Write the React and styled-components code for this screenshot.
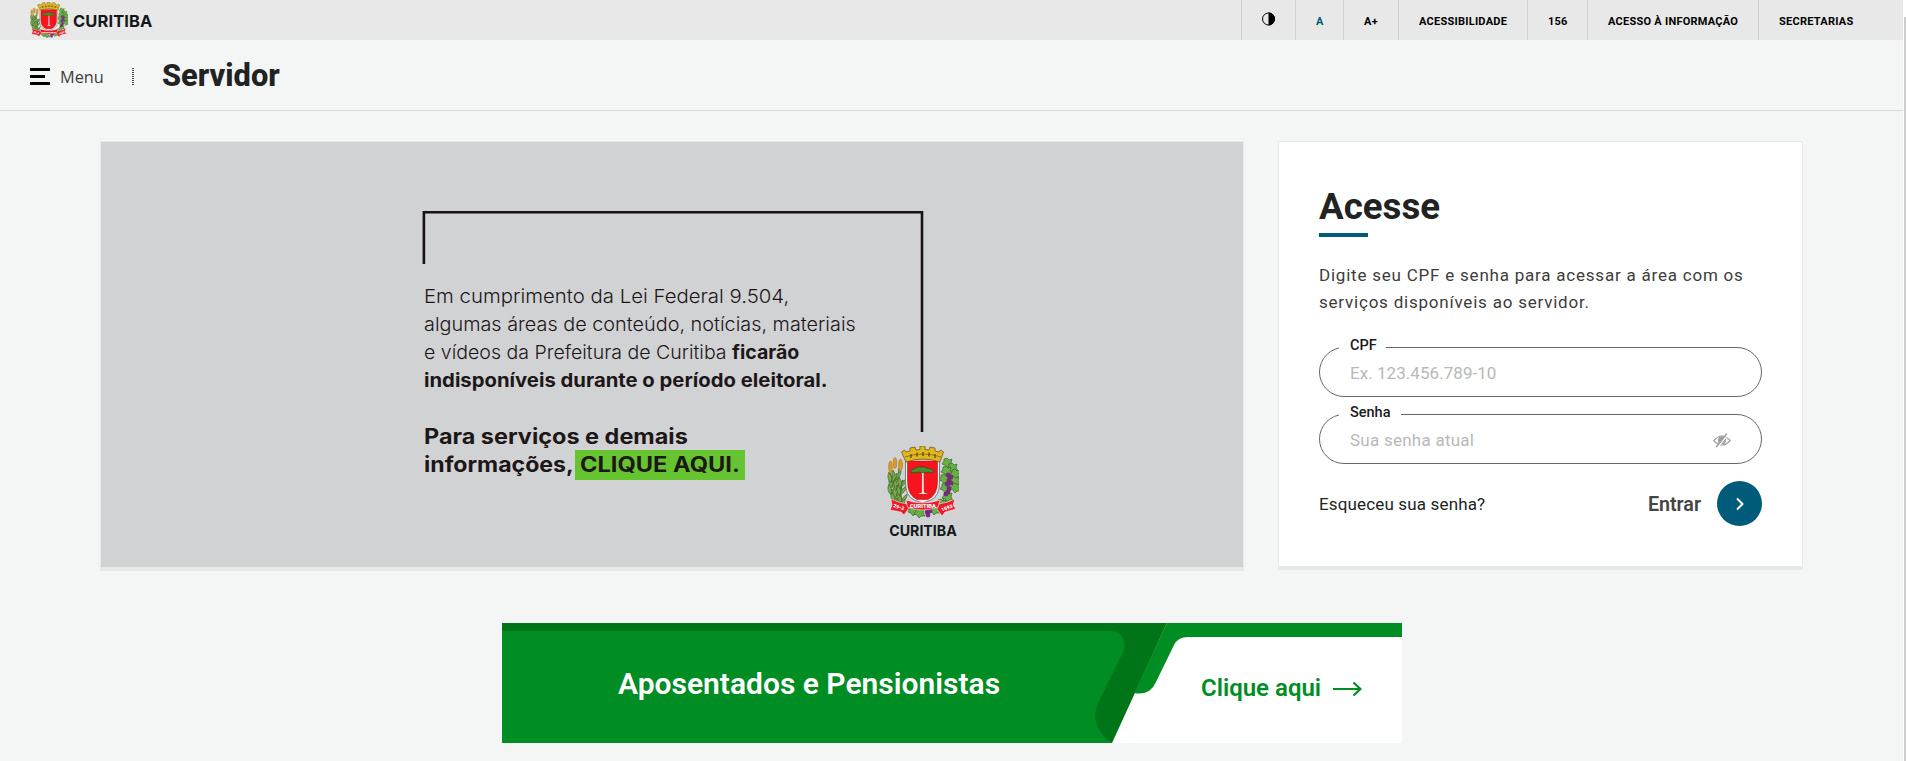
import React from "react";
import styled, { createGlobalStyle } from "styled-components";

const Global = createGlobalStyle`
  * { box-sizing: border-box; }
  html, body { margin: 0; padding: 0; }
  body {
    background: #f4f6f6;
    font-family: Roboto, "Liberation Sans", sans-serif;
    color: #212322;
    overflow: hidden;
  }
`;

const Shell = styled.div`
  display: flex;
  height: 761px;
  overflow: hidden;
`;

const Page = styled.div`
  width: 1903px;
  flex: none;
`;

const ScrollTrack = styled.div`
  flex: 1;
  padding: 17px 0 0 1px;
  background: #fff;
`;

const ScrollThumb = styled.div`
  height: 744px;
  background: #cdcdcd;
`;

const TopBar = styled.header`
  display: flex;
  justify-content: space-between;
  height: 40px;
  padding: 0 29px 0 30px;
  background: #e8e8e8;
`;

const Brand = styled.a`
  display: flex;
  align-items: center;
  gap: 5px;
  height: 40px;
`;

const BrandName = styled.span`
  padding-top: ${(p) => p.$drop || 0}px;
  font: 700 ${(p) => p.$size}px/1 Inter, sans-serif;
  letter-spacing: ${(p) => p.$track}px;
  color: #14181a;
`;

const TopNav = styled.nav`
  display: flex;
`;

const TopLink = styled.a`
  display: flex;
  align-items: center;
  width: ${(p) => p.$w}px;
  height: 40px;
  padding: 2px 0 0 20px;
  border-left: 1px solid #d3d3d3;
  font-size: 11px;
  font-weight: 700;
  letter-spacing: 0.25px;
  white-space: nowrap;
  color: ${(p) => (p.$active ? "#005a7a" : "#000")};
`;

const MenuBar = styled.div`
  display: flex;
  align-items: center;
  height: 71px;
  padding-left: 30px;
  border-bottom: 1px solid #d9dcdc;
`;

const Burger = styled.span`
  display: flex;
  flex-direction: column;
  gap: 4px;
  width: 20px;
  margin-top: 2px;
`;

const Bar = styled.i`
  height: 3px;
  width: ${(p) => p.$w}px;
  background: #000;
`;

const MenuLabel = styled.span`
  width: 72px;
  margin: 3px 0 0 10px;
  font: 400 16.3px/24px "Open Sans", sans-serif;
  color: #3c3c3b;
`;

const Divider = styled.span`
  width: 2px;
  height: 17px;
  margin-top: 2px;
  background: repeating-linear-gradient(#444 0 1px, transparent 1px 2px);
`;

const SiteTitle = styled.h1`
  margin: 2px 0 0 28px;
  font-size: 30.800px;
  line-height: 40px;
  font-weight: 800;
`;

const Main = styled.main`
  padding: 30px 100px 0;
`;

const Columns = styled.div`
  display: flex;
  align-items: flex-start;
  gap: 34px;
`;

const Panel = styled.section`
  width: ${(p) => p.$w}px;
  height: ${(p) => p.$h}px;
  background: ${(p) => p.$bg};
  border: 1px solid #e7e8e8;
  border-bottom-width: 4px;
`;

const Notice = styled.div`
  position: relative;
  padding: 141px 0 0 323px;
  color: #1d1718;
  font-family: Inter, sans-serif;
`;

const Frame = styled.svg`
  position: absolute;
  left: 321px;
  top: 68px;
`;

const Line = styled.div`
  height: 28px;
  line-height: 28px;
  font-size: ${(p) => p.$size}px;
  font-weight: ${(p) => p.$weight};
  white-space: nowrap;
  transform: scaleX(${(p) => p.$stretch});
  transform-origin: left;
`;

const Strong = styled.b`
  font-weight: 700;
`;

const CallToAction = styled.div`
  display: flex;
  margin-top: 28px;
  flex-direction: column;
`;

const LinkRow = styled.div`
  display: grid;
  grid-template-columns: 151px 170px;
  align-items: start;
`;

const Highlight = styled.a`
  height: 30px;
  margin-top: -1px;
  padding: 1px 0 0 5px;
  background: #66c430;
`;

const Seal = styled.div`
  position: absolute;
  left: 785px;
  top: 304px;
  width: 74px;
  display: flex;
  flex-direction: column;
  align-items: center;
  gap: 6px;
`;

const LoginBody = styled.div`
  padding: 40px 40px 0;
`;

const Heading = styled.h2`
  margin: 0;
  height: 55px;
  padding-top: 1px;
  font-size: 36.700px;
  line-height: 48px;
  font-weight: 700;
`;

const Underline = styled.div`
  width: 49px;
  height: 4px;
  margin-top: -4px;
  background: #005a7a;
`;

const Intro = styled.p`
  margin: 25px 0 23px;
  font-size: 17px;
  line-height: 27px;
  letter-spacing: 0.78px;
  color: #3c3c3b;
  white-space: nowrap;
`;

const Field = styled.fieldset`
  width: 443px;
  height: 58px;
  margin: 0 0 9px;
  padding: 0 30px 0 19px;
  border: 1px solid #666;
  border-radius: 25px;
  min-width: 0;
`;

const FieldLabel = styled.legend`
  width: ${(p) => p.$w}px;
  height: 17px;
  padding: 0 0 0 11px;
  font-size: 14.500px;
  line-height: 14px;
  font-weight: 500;
  color: #1a1a1a;
`;

const InputRow = styled.div`
  display: flex;
  align-items: center;
  justify-content: space-between;
  height: 34px;
  padding: 0 0 0 11px;
`;

const Input = styled.input`
  flex: 1;
  border: 0;
  padding: 0;
  outline: 0;
  background: transparent;
  font: 400 17px/24px Roboto, sans-serif;
  letter-spacing: ${(p) => p.$track}px;
  &::placeholder { color: #b8b8b8; opacity: 1; }
`;

const Actions = styled.div`
  display: flex;
  align-items: center;
  height: 45px;
  margin-top: 17px;
`;

const Forgot = styled.a`
  flex: 1;
  font-size: 17px;
  letter-spacing: 0.15px;
  color: #212322;
`;

const SubmitLabel = styled.span`
  margin-right: 16px;
  padding-top: 1px;
  font-size: 19.700px;
  font-weight: 600;
  color: #444546;
`;

const SubmitButton = styled.button`
  display: grid;
  place-items: center;
  width: 45px;
  height: 45px;
  padding: 0;
  border: 0;
  border-radius: 50%;
  background: #005a7a;
`;

const Banner = styled.a`
  position: relative;
  display: flex;
  width: 900px;
  height: 120px;
  margin: 52px auto 0 402px;
  background: #fff;
`;

const BannerArt = styled.svg`
  position: absolute;
  inset: 0;
`;

const BannerTitle = styled.span`
  position: relative;
  width: 583px;
  padding: 41px 0 0 116px;
  font-size: 30px;
  line-height: 40px;
  font-weight: 600;
  color: #fff;
  white-space: nowrap;
`;

const BannerAction = styled.span`
  position: relative;
  display: flex;
  align-items: center;
  gap: 11px;
  height: 40px;
  margin: 45px 0 0 116px;
  font-size: 24px;
  font-weight: 600;
  color: #008d24;
  white-space: nowrap;
`;

const leafSpots = [
  [8, 29], [5, 36], [10, 38], [4, 43], [9, 46], [14, 52], [7, 51], [12, 57], [16, 60], [4, 31], [13, 44], [14, 36],
];
const vineSpots = [
  [60, 17], [65, 22], [59, 25], [68, 28], [57, 33], [67, 35], [58, 42], [68, 42], [60, 51], [54, 58], [47, 64], [26, 65], [32, 67],
];
const grapeSpots = [
  [61, 29], [64, 31], [62, 34], [64, 37], [60, 38], [62, 42], [61, 46], [59, 48], [40, 66], [43, 65], [41, 69],
];

function Crest({ width, height }) {
  return (
    <svg width={width} height={height} viewBox="0 0 72 72" preserveAspectRatio="none">
      <g stroke="#46732e" strokeWidth="1.400" fill="none">
        <path d="M22 64C12 52 7 38 3 27M17 60C12 48 11 36 12 22M7 48 2 40M12 50 16 34M51 62C61 52 62 30 60 18" />
      </g>
      <g fill="#7dab4b" stroke="#3d6b2b" strokeWidth=".7">
        {leafSpots.map(([x, y], i) => (
          <path key={i} d={`M${x} ${y + 6}q-5-5-2-11q4 5 2 11M${x} ${y + 5}q1-6 6-9q0 6-6 9`} />
        ))}
      </g>
      <g fill="#68b045" stroke="#34682c" strokeWidth=".7">
        {vineSpots.map(([x, y], i) => (
          <path key={i} d={`M${x} ${y - 5}l2 2 3-1-1 4 2 3-4 0-2 2-2-3-3-1 2-3 0-2z`} />
        ))}
      </g>
      <g fill="#7d2a82" stroke="#58205d" strokeWidth=".3">
        {grapeSpots.map(([x, y], i) => <circle key={i} cx={x} cy={y} r="2.200" />)}
      </g>
      <g fill="#d99b27" stroke="#99732a" strokeWidth=".5">
        <ellipse cx="3.500" cy="21" rx="1.900" ry="6" />
        <ellipse cx="8" cy="17" rx="1.800" ry="5.500" />
        <ellipse cx="13.500" cy="19" rx="2" ry="6" />
      </g>
      <path d="M18.500 13H52.500V36Q52.500 50 44 54L35.500 57 27 54Q18.500 50 18.500 36Z" fill="#f2f2f2" stroke="#666" strokeWidth=".8" />
      <path d="M20.500 15H50.500V36Q50.500 49 41 53.500H30Q20.500 49 20.500 36Z" fill="#f9141d" stroke="#701519" strokeWidth=".5" />
      <path d="M35 26h1.600l.3 20.500 4 1.500h-10l4-1.500z" fill="#e9e4dc" />
      <path d="M23 26q1-3 4-3 3-3 6-2 4-1 7 1 5 0 7 4-3 2-6 0-2 2-4 0-2 2-5 0-4 2-9 0z" fill="#4c8c2c" stroke="#254b1d" strokeWidth=".7" />
      <path d="M19 16 14.500 6l3-2 1.500 2 4-1 0-3 5-1 1 3 4-.5V0h5v3.500l4 .5 1-3 5 1 0 3 4 1 1.500-2 3 2L53 16Q36 10 19 16Z" fill="#e1b71d" stroke="#715b17" strokeWidth=".8" />
      <path d="M18 11Q36 5 54 11" stroke="#97771a" fill="none" />
      <path d="M24 8v4M30 6.500v4M36 6v4M42 6.500v4M48 8v4" stroke="#4d411b" strokeWidth="1.200" />
      <path d="M4 53Q12 57 20 58L22 62 17 69 14 66 3 64 5 59ZM68 53Q60 57 52 58L50 63 55 70 58 66 69 63 66 59Z" fill="#ed1b29" stroke="#fff" strokeWidth=".5" />
      <path d="M19 54Q35.500 60 53 54L51 61Q35.500 67 20.500 61Z" fill="#ed1b29" stroke="#fff" strokeWidth=".5" />
      <g fill="#fff" fontFamily="Roboto" fontSize="5" fontWeight="900">
        <text x="23" y="62" textLength="26" lengthAdjust="spacingAndGlyphs">CURITIBA</text>
        <text x="6" y="61" transform="rotate(18 6 61)">29-3</text>
        <text x="55" y="65.500" transform="rotate(-20 55 65.500)">1693</text>
      </g>
    </svg>
  );
}

const ContrastIcon = styled.svg`
  margin-top: -4px;
`;

function Contrast() {
  return (
    <ContrastIcon width="14" height="14" viewBox="0 0 14 14">
      <circle cx="6.500" cy="7" r="6" fill="none" stroke="#000" />
      <path d="M6.500 .5a6.500 6.500 0 0 1 0 13z" />
    </ContrastIcon>
  );
}

function HiddenEye() {
  return (
    <svg width="18" height="15" viewBox="0 0 18 15" fill="none" stroke="#a0a0a0">
      <path d="M.8 7.500Q9-1.500 17.200 7.500Q9 16.500 .8 7.500Z" strokeWidth="1.200" />
      <circle cx="9" cy="7.300" r="4" fill="#a0a0a0" stroke="none" />
      <path d="M4.600 14.500 15.100 1.300" stroke="#fff" strokeWidth="1.300" />
      <path d="M3.200 14 13.700.8" strokeWidth="1.500" />
    </svg>
  );
}

export default function App() {
  return (
    <>
      <Global />
      <Shell>
        <Page>
          <TopBar>
            <Brand>
              <Crest width={38} height={36} />
              <BrandName $size={16.5} $track={0.1} $drop={2}>CURITIBA</BrandName>
            </Brand>
            <TopNav>
              <TopLink $w={54}><Contrast /></TopLink>
              <TopLink $w={48} $active>A</TopLink>
              <TopLink $w={55}>A+</TopLink>
              <TopLink $w={129}>ACESSIBILIDADE</TopLink>
              <TopLink $w={60}>156</TopLink>
              <TopLink $w={171}>ACESSO À INFORMAÇÃO</TopLink>
              <TopLink $w={116}>SECRETARIAS</TopLink>
            </TopNav>
          </TopBar>
          <MenuBar>
            <Burger><Bar $w={20} /><Bar $w={15} /><Bar $w={20} /></Burger>
            <MenuLabel>Menu</MenuLabel>
            <Divider />
            <SiteTitle>Servidor</SiteTitle>
          </MenuBar>
          <Main>
            <Columns>
              <Panel $w={1144} $h={430} $bg="#d1d2d4">
                <Notice>
                  <Frame width="503" height="223" fill="none" stroke="#1a1315" strokeWidth="2.600">
                    <path d="M1.900 54V2.300H500V222" />
                  </Frame>
                  <Line $size={18.8} $weight={300} $stretch={1.084}>Em cumprimento da Lei Federal 9.504,</Line>
                  <Line $size={18.8} $weight={300} $stretch={1.056}>algumas áreas de conteúdo, notícias, materiais</Line>
                  <Line $size={18.8} $weight={300} $stretch={1.04}>e vídeos da Prefeitura de Curitiba <Strong>ficarão</Strong></Line>
                  <Line $size={18.8} $weight={700} $stretch={1.079}>indisponíveis durante o período eleitoral.</Line>
                  <CallToAction>
                    <Line $size={21} $weight={700} $stretch={1.116}>Para serviços e demais</Line>
                    <LinkRow>
                      <Line $size={21} $weight={700} $stretch={1.1}>informações,</Line>
                      <Highlight>
                        <Line $size={21} $weight={700} $stretch={1.125}>CLIQUE AQUI.</Line>
                      </Highlight>
                    </LinkRow>
                  </CallToAction>
                  <Seal>
                    <Crest width={72} height={72} />
                    <BrandName $size={14.2} $track={0}>CURITIBA</BrandName>
                  </Seal>
                </Notice>
              </Panel>
              <Panel $w={525} $h={429} $bg="#fff">
                <LoginBody>
                  <Heading>Acesse</Heading>
                  <Underline />
                  <Intro>Digite seu CPF e senha para acessar a área com os<br />serviços disponíveis ao servidor.</Intro>
                  <Field>
                    <FieldLabel $w={47}>CPF</FieldLabel>
                    <InputRow><Input $track={0.05} placeholder="Ex. 123.456.789-10" /></InputRow>
                  </Field>
                  <Field>
                    <FieldLabel $w={62}>Senha</FieldLabel>
                    <InputRow><Input $track={0.25} placeholder="Sua senha atual" /><HiddenEye /></InputRow>
                  </Field>
                  <Actions>
                    <Forgot>Esqueceu sua senha?</Forgot>
                    <SubmitLabel>Entrar</SubmitLabel>
                    <SubmitButton aria-label="Entrar">
                      <svg width="10" height="14" viewBox="0 0 10 14" fill="none" stroke="#fff" strokeWidth="2">
                        <path d="M2 1.500 7.500 7 2 12.500" />
                      </svg>
                    </SubmitButton>
                  </Actions>
                </LoginBody>
              </Panel>
            </Columns>
            <Banner>
              <BannerArt width="900" height="120" viewBox="0 0 900 120">
                <path d="M0 0H665L610 120H0Z" fill="#007518" />
                <path d="M0 8H609C620 8 625 19 621 29L596 80C589 96 596 111 610 120H0Z" fill="#008d24" />
                <path d="M665 0H900V14H686Q676 14 672 22L654 59Q648 73 632 70Z" fill="#008d24" />
              </BannerArt>
              <BannerTitle>Aposentados e Pensionistas</BannerTitle>
              <BannerAction>
                Clique aqui
                <svg width="30" height="16" viewBox="0 0 30 16" fill="none" stroke="#008d24" strokeWidth="2.200">
                  <path d="M1 9H28M21.500 2.500 28.500 9 21.500 15.500" />
                </svg>
              </BannerAction>
            </Banner>
          </Main>
        </Page>
        <ScrollTrack><ScrollThumb /></ScrollTrack>
      </Shell>
    </>
  );
}
